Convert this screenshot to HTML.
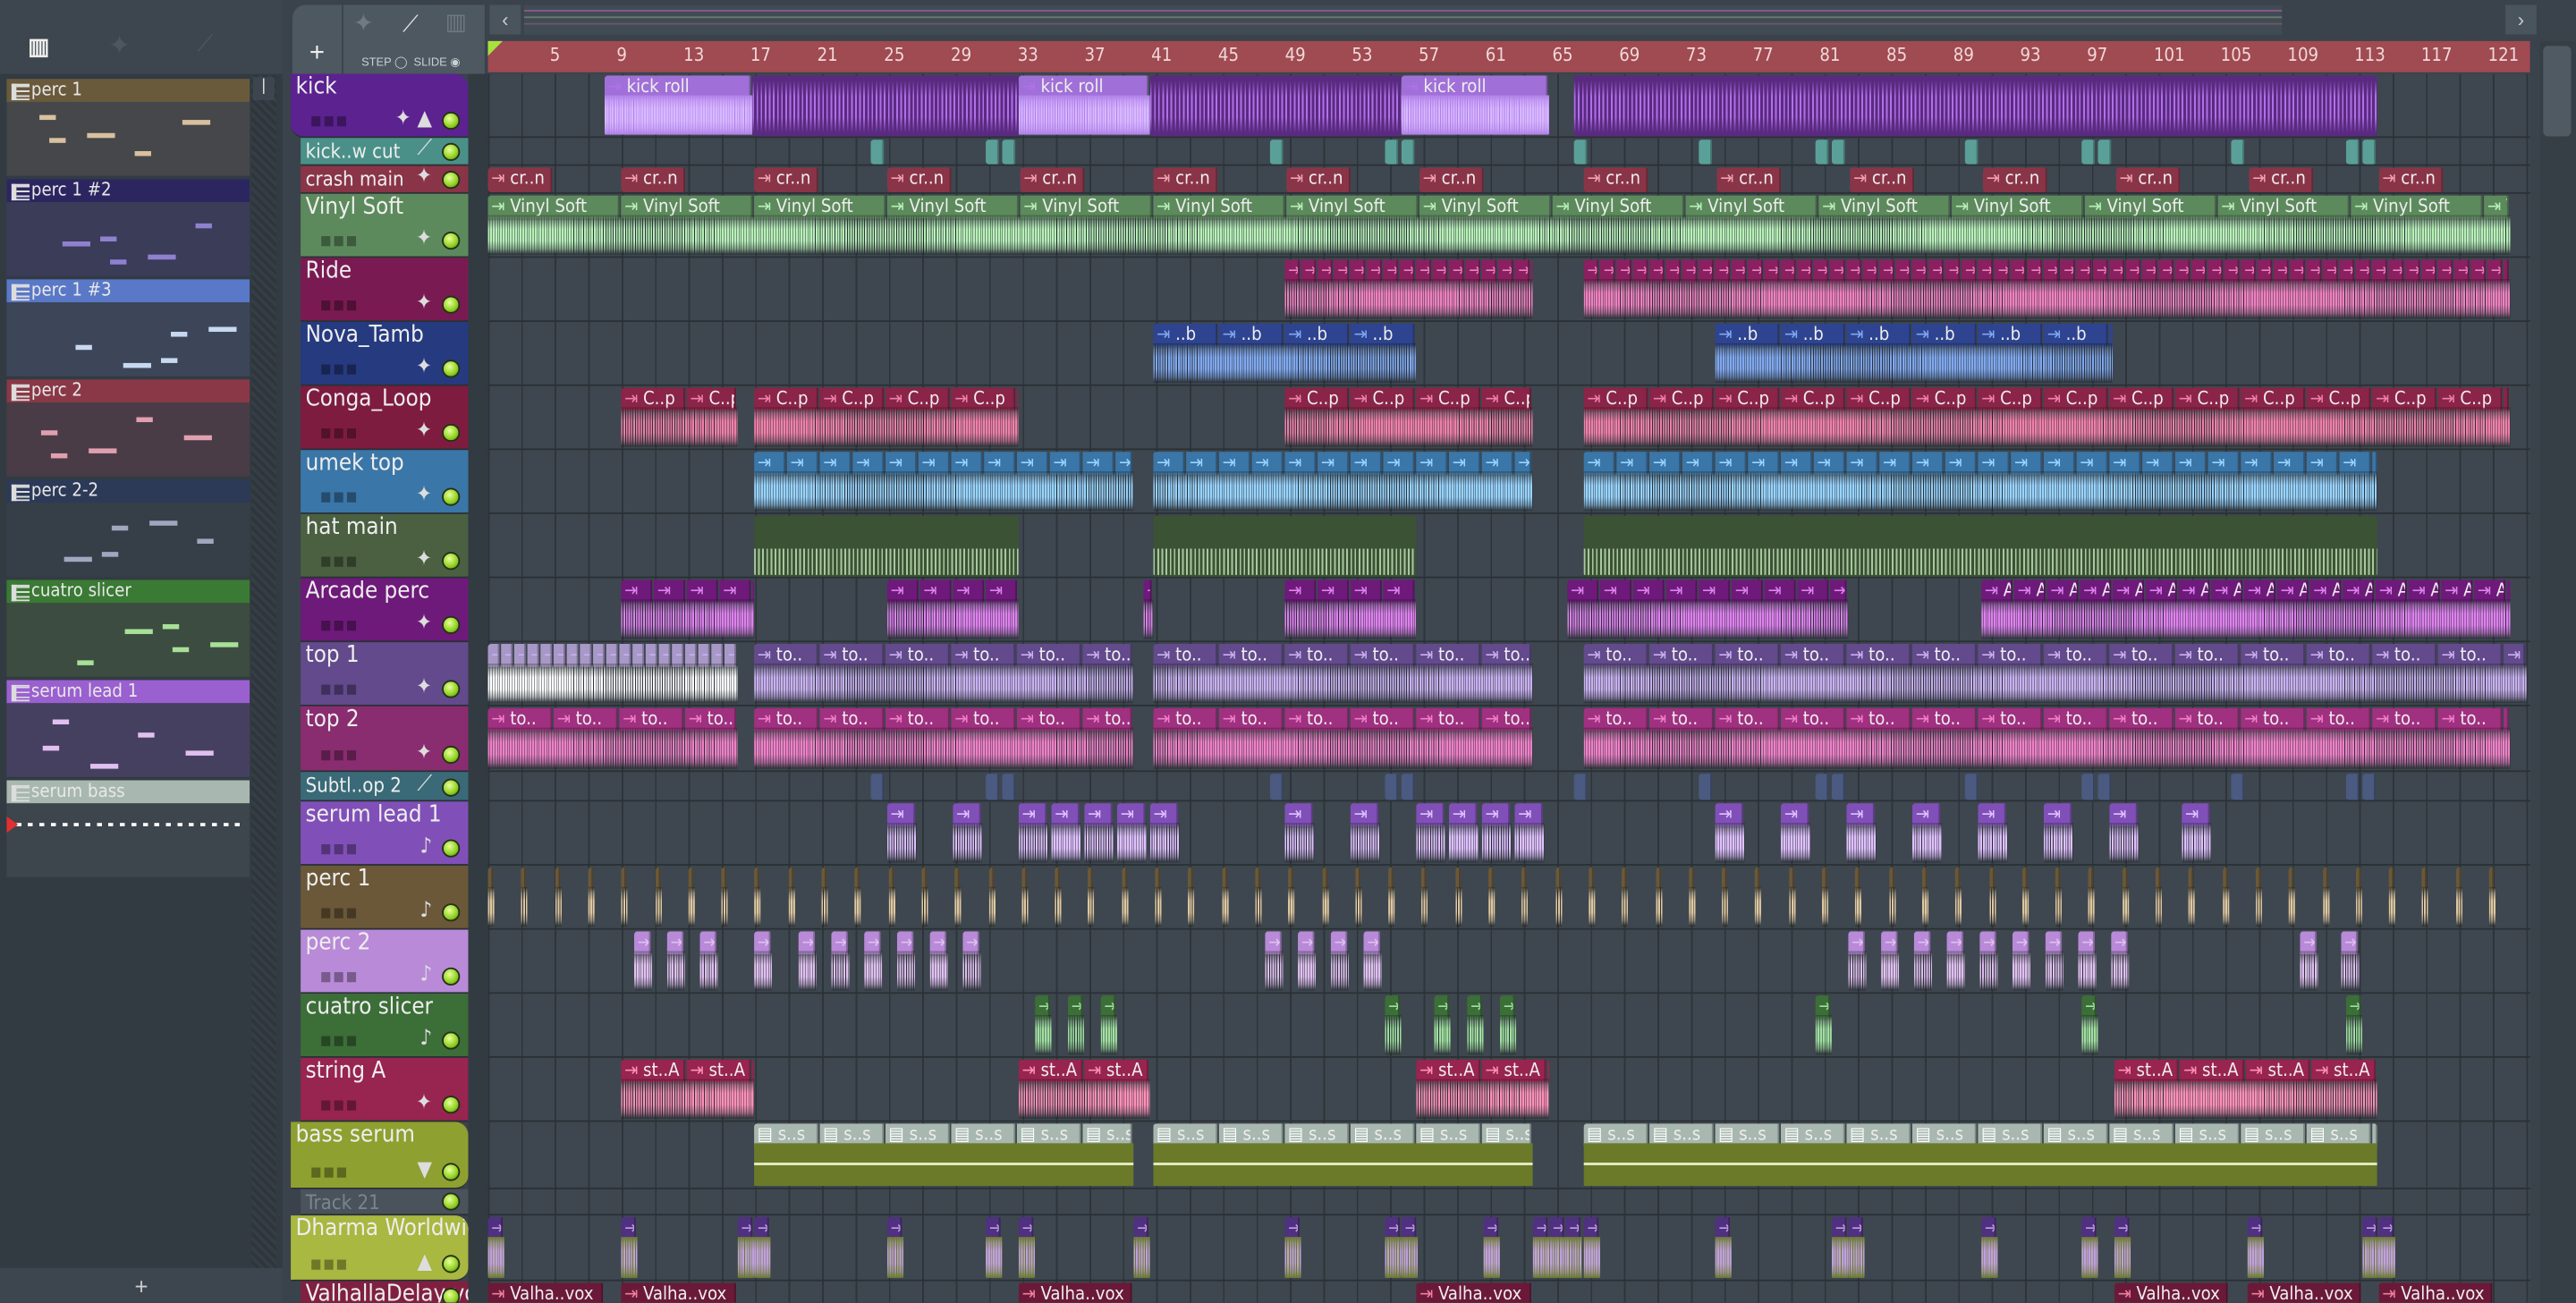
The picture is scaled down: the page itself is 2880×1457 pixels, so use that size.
<!DOCTYPE html>
<html><head><meta charset="utf-8">
<style>
*{box-sizing:border-box;margin:0;padding:0}
html,body{width:2880px;height:1456px;overflow:hidden;background:#3a434b}
#root{position:absolute;left:0;top:0;width:1568px;height:793px;transform:scale(1.836735);transform-origin:0 0;background:#3a434b;font-family:"Liberation Sans",sans-serif;overflow:hidden}
.abs{position:absolute}
.pat{position:absolute;left:4px;width:148px;height:59px;overflow:hidden}
.pat .t{height:14px;font:11px/14px "DejaVu Sans Condensed","Liberation Sans",sans-serif;color:#e8e8e8;padding-left:15px;position:relative}
.pat .t:before{content:"";position:absolute;left:3px;top:3px;width:8px;height:8px;border-left:3px solid #ddd;border-top:1px solid #ddd;border-bottom:1px solid #ddd;background:repeating-linear-gradient(#ddd 0 1px,transparent 1px 3px)}
.hdr{position:absolute;left:183px;width:102px;font:14px/17px "DejaVu Sans Condensed","Liberation Sans",sans-serif;color:#eee;padding-left:3px;overflow:hidden;white-space:nowrap;border-bottom:1px solid #2a3035}
.led{position:absolute;right:5px;bottom:4px;width:11px;height:11px;border-radius:50%;background:radial-gradient(circle at 40% 35%,#e8ff9a,#8fd020 60%,#4a7a10);border:1px solid #263018}
.ico{position:absolute;right:22px;bottom:2px;font-size:13px;color:#ddd}
.dots{position:absolute;left:12px;bottom:1px;font-size:8px;color:rgba(0,0,0,.35);letter-spacing:1px}
.clip{position:absolute;overflow:hidden;border-radius:2px}
.tl{position:absolute;top:25px;font:11px/18px "DejaVu Sans Condensed","Liberation Sans",sans-serif;color:#f0d8d8}
</style></head><body><div id="root">
<div class="abs" style="left:0;top:0;width:172px;height:45px;background:#3d464e"></div>
<div class="abs" style="left:17px;top:20px;font:bold 14px 'Liberation Sans';color:#eee">▥</div>
<div class="abs" style="left:66px;top:18px;font-size:16px;color:#4c575f">✦</div>
<div class="abs" style="left:120px;top:18px;font-size:14px;color:#4c575f">⟋</div>
<div class="abs" style="left:0;top:45px;width:172px;height:727px;background:#323b42"></div>
<div class="abs" style="left:153px;top:46px;width:15px;height:726px;background:repeating-linear-gradient(45deg,#353e45 0 2px,#2e363c 2px 4px)"></div>
<div class="abs" style="left:154px;top:47px;width:13px;height:14px;background:#3d464e;color:#ddd;font-size:10px;text-align:center">|</div>
<div class="abs" style="left:0;top:772px;width:172px;height:21px;background:#3d464e;color:#ccc;font-size:14px;text-align:center;line-height:22px">+</div>
<div class="abs" style="left:172px;top:0;width:1396px;height:45px;background:#3a434b"></div>
<div class="abs" style="left:178px;top:3px;width:30px;height:42px;background:#4e5860;border-radius:8px 0 0 0;color:#eee;font-size:16px;text-align:center;line-height:60px">+</div>
<div class="abs" style="left:209px;top:3px;width:86px;height:42px;background:#4e5860;color:#c8d0d4;font:7px 'Liberation Sans'">
<span class="abs" style="left:6px;top:2px;font-size:15px;color:#6f7a82">✦</span><span class="abs" style="left:36px;top:3px;font-size:14px;color:#dde">⟋</span><span class="abs" style="left:62px;top:2px;font-size:14px;color:#6f7a82">▥</span>
<span class="abs" style="left:11px;top:31px">STEP ◯ &nbsp;SLIDE ◉</span></div>
<div class="abs" style="left:298px;top:3px;width:19px;height:18px;background:#4a545c;color:#ccc;font-size:12px;text-align:center;line-height:18px">‹</div>
<div class="abs" style="left:319px;top:3px;width:1070px;height:18px;background:#414b53"></div>
<div class="abs" style="left:319px;top:6px;width:1070px;height:1px;background:#8a5a90"></div>
<div class="abs" style="left:319px;top:10px;width:1070px;height:1px;background:#6a7a70"></div>
<div class="abs" style="left:319px;top:14px;width:1070px;height:1px;background:#6a5868"></div>
<div class="abs" style="left:1525px;top:3px;width:19px;height:18px;background:#4a545c;color:#ccc;font-size:12px;text-align:center;line-height:18px">›</div>
<div class="abs" style="left:297px;top:25px;width:1243px;height:19px;background:#a04a52"></div>
<div class="abs" style="left:297px;top:25px;width:0;height:0;border-left:9px solid #a8e040;border-bottom:9px solid transparent"></div>
<div class="abs" style="left:285px;top:45px;width:12px;height:748px;background:#323b41"></div>
<div class="abs" style="left:297px;top:45px;width:1243px;height:748px;background-color:#3e474f;background-image:repeating-linear-gradient(90deg,#2d353b 0 1px,transparent 1px 20.34px)"></div>
<div class="abs" style="left:1546px;top:25px;width:22px;height:768px;background:#363f46"></div>
<div class="abs" style="left:1548px;top:28px;width:17px;height:55px;background:#505a62;border-radius:3px"></div>
</div>
<script>
const R=document.getElementById('root');
function el(h){R.insertAdjacentHTML('beforeend',h)}
const pats=[["perc 1","#6a5a3c","#45474a","#d8c0a0",48],["perc 1  #2","#2c2660","#3a3c58","#9080d0",109],["perc 1  #3","#5a78c8","#3c4658","#c8d8f0",170],["perc 2","#8a3848","#4a3c46","#e0a0b0",231],["perc 2-2","#2c3a58","#363f48","#a0a8c0",292],["cuatro slicer","#3a7a34","#3c4c40","#a8e098",353],["serum lead 1","#9a60d0","#464060","#e0c0f0",414],["serum bass","#a8b8b0","#3c464c","#fff",475]];
pats.forEach((p,i)=>{let notes='';for(let k=0;k<5;k++){notes+=`<div class="abs" style="left:${20+((i*37+k*29)%110)}px;top:${22+((i*13+k*11)%30)}px;width:${10+(k*7%14)}px;height:3px;background:${p[3]}"></div>`}
if(i==7)notes=`<div class="abs" style="left:6px;top:26px;width:140px;height:2px;background:repeating-linear-gradient(90deg,#fff 0 3px,transparent 3px 7px)"></div><div class="abs" style="left:0;top:22px;border-left:7px solid #e03030;border-top:5px solid transparent;border-bottom:5px solid transparent"></div>`;
el(`<div class="pat" style="top:${p[4]}px;background:${p[2]}"><div class="t" style="background:${p[1]}">${p[0]}</div>${notes}</div>`)});
for(let n=1;n<=121;n+=4){let x=297+(n-1)*10.17;el(`<div class="tl" style="left:${x-3}px">${n==1?'':n}</div>`)}
const T=[
["kick",45,39,"#5c2290","#7a3aa8","#b070e8","✦ ▲"],
["kick..w cut",84,17,"#4a9088","#5aa098","#bfe","⟋"],
["crash main",101,17,"#8a3448","#8a3448","#f0a0b0","✦"],
["Vinyl Soft",118,39,"#5c8a5c","#5c8a5c","#b8f0b8","✦"],
["Ride",157,39,"#7a1a52","#8a2060","#f080c0","✦"],
["Nova_Tamb",196,39,"#263a80","#2e4490","#80a8f0","✦"],
["Conga_Loop",235,39,"#7e1c40","#8a2448","#f080a8","✦"],
["umek top",274,39,"#3a76a8","#3a76a8","#98d4ff","✦"],
["hat main",313,39,"#4a6040","#3e5238","#a8c8a0","✦"],
["Arcade perc",352,39,"#6e1a7a","#6e1a7a","#e080f0","✦"],
["top 1",391,39,"#624a8c","#624a8c","#c8b0f0","✦"],
["top 2",430,40,"#8a2c70","#a03080","#f080c8","✦"],
["Subtl..op 2",470,18,"#3a6a78","#4a5a80","#bcd","⟋"],
["serum lead 1",488,39,"#8050b8","#8050b8","#e0c0ff","♪"],
["perc 1",527,39,"#6a5838","#6a5838","#e0c8a0","♪"],
["perc 2",566,39,"#b88ad8","#b88ad8","#e0c0f0","♪"],
["cuatro slicer",605,39,"#3c6e38","#3c6e38","#a0e0a0","♪"],
["string A",644,39,"#982450","#982450","#ff90b8","✦"],
["bass serum",683,41,"#8ea030","#a8b8b0","#e0f0c0","▼"],
["Track 21",724,16,"#4a535b","#4a535b","#888",""],
["Dharma Worldwid..",740,40,"#a8b840","#503080","#c0a0e0","▲"],
["ValhallaDelay vox",780,20,"#802040","#6a1a38","#f080a0",""]];
const clips={
0:[[368,458,"kick roll",90,"#a070d8"],[458,620,"",0],[620,700,"kick roll",80,"#a070d8"],[700,853,"",0],[853,943,"kick roll",90,"#a070d8"],[958,1447,"",0]],
3:[[297,1528,"Vinyl Soft",81]],
4:[[782,933,"",10],[964,1528,"",10]],
5:[[702,862,"..b",40],[1044,1286,"..b",40]],
6:[[378,449,"C..p",40],[459,620,"C..p",40],[782,933,"C..p",40],[964,1528,"C..p",40]],
7:[[459,690,"",20],[702,933,"",20],[964,1447,"",20]],
8:[[459,620,"",0],[702,862,"",0],[964,1447,"",0]],
9:[[378,459,"",20],[540,620,"",20],[696,702,"",6],[782,862,"",20],[954,1125,"",20],[1206,1528,"A..",20]],
10:[[297,449,"",8,"#a898c8"],[459,690,"to..",40],[702,933,"to..",40],[964,1538,"to..",40]],
11:[[297,449,"to..",40],[459,690,"to..",40],[702,933,"to..",40],[964,1528,"to..",40]],
17:[[378,459,"st..A",40],[620,700,"st..A",40],[862,943,"st..A",40],[1287,1447,"st..A",40]],
18:[[459,690,"s..s",40],[702,933,"s..s",40],[964,1447,"s..s",40]],
21:[[297,368,"Valha..vox",71],[378,449,"Valha..vox",71],[620,690,"Valha..vox",71],[862,933,"Valha..vox",71],[1287,1357,"Valha..vox",71],[1368,1438,"Valha..vox",71],[1448,1518,"Valha..vox",71]]};
const crash=[297,378,459,540,621,702,783,864,964,1045,1126,1207,1288,1369,1448];
clips[2]=crash.map(x=>[x,x+40,"cr..n",40]);
const auto=[530,600,610,773,843,853,958,1034,1105,1115,1196,1267,1277,1358,1428,1438];
clips[1]=auto.map(x=>[x,x+9,"",9]);clips[12]=auto.map(x=>[x,x+9,"",9]);
const sl=[540,580,620,640,660,680,700,782,822,862,882,902,922,1044,1084,1124,1164,1204,1244,1284,1328];
clips[13]=sl.map(x=>[x,x+18,"",18]);
let p1=[];for(let x=297;x<1520;x+=20.3)p1.push([x,x+4,"",4]);clips[14]=p1;
clips[15]=[386,406,426,459,486,506,526,546,566,586,770,790,810,830,1125,1145,1165,1185,1205,1225,1245,1265,1285,1400,1425].map(x=>[x,x+11,"",11]);
clips[16]=[630,650,670,843,873,893,913,1105,1267,1428].map(x=>[x,x+10,"",10]);
clips[20]=[297,378,449,459,540,600,620,690,782,843,853,903,933,964,1044,1115,1125,1206,1267,1287,1368,1438,1448].map(x=>[x,x+(x==933?30:10),"",10]);
T.forEach((t,i)=>{
 const [name,y,h,hc,cc,wc,ic]=t;
 const rnd=(i==18||i==20)?"border-radius:0 8px 8px 0;left:177px;width:108px;":(i==0?"border-radius:0 8px 0 8px;left:177px;width:108px;":"");
 el(`<div class="hdr" style="top:${y}px;height:${h}px;background:${hc};${rnd}${i==19?'color:#7a858d;':''}${h<20?'font-size:12px;line-height:16px':''}">${name}${h>20?'<span class="dots">■■■</span>':''}<span class="ico" style="${h<20?'bottom:1px':''}">${ic}</span><span class="led" style="${h<20?'bottom:2px':''}"></span></div>`);
 el(`<div class="abs" style="left:297px;top:${y+h-1}px;width:1243px;height:1px;background:#2a3136"></div>`);
 (clips[i]||[]).forEach(c=>{
  const [x1,x2,lab,seg,light]=c;const w=x2-x1;const lh=h>20?14:h;
  let labs='';
  if(seg>0){for(let x=0;x<w;x+=seg){labs+=`<div class="abs" style="left:${x}px;top:0;width:${Math.min(seg,w-x)-1}px;height:${lh}px;background:${light||cc};border-right:1px solid rgba(0,0,0,.25);font:11px/13px 'DejaVu Sans Condensed','Liberation Sans',sans-serif;color:#eee;white-space:nowrap;overflow:hidden;padding-left:2px">${h>20||lab?(i==18?'<b style="color:#fff">▤</b>':'<span style="color:'+wc+'">⇥</span>')+' '+lab:''}</div>`}}
  const bh=h>20?h-lh-1:0;
  let body='';
  if(h>20){
   const dark=(i==8)?'#3a4a34':(i==18?'#6a7a28':(i==20?'#6a7a30':(light&&i==0?'#b080e8':'rgba(0,0,0,.28)')));
   const col=(i==10&&light)?'#ffffff':(i==0&&light?'#d8b8ff':wc);
   const wave=(i==18)?`linear-gradient(transparent 45%,#e0e8c0 45% 52%,transparent 52%)`:`repeating-linear-gradient(90deg,${col} 0 1px,transparent 1px 1.4px,${col} 1.4px 2.6px,transparent 2.6px 3px)`;
   const mask=i==18?'':'-webkit-mask:linear-gradient(transparent 0,rgba(0,0,0,.6) 15%,#000 35%,#000 65%,rgba(0,0,0,.6) 85%,transparent 100%);';
   body=`<div class="abs" style="left:0;bottom:1px;width:${w}px;height:${bh}px;background:${dark}"></div><div class="abs" style="left:0;bottom:1px;width:${w}px;height:${bh}px;background:${wave};${mask}"></div>`;
   if(seg==0){body=`<div class="abs" style="left:0;top:0;width:${w}px;height:${h-1}px;background:${i==8?'#3c5234':'#5a2a80'}"></div><div class="abs" style="left:0;top:${i==8?h/2:3}px;width:${w}px;height:${i==8?h/2-3:h-7}px;background:repeating-linear-gradient(90deg,${wc} 0 1px,transparent 1px 2.5px);${i==8?'':'-webkit-mask:linear-gradient(transparent,#000 30%,#000 70%,transparent)'}"></div>`}
  }
  el(`<div class="clip" style="left:${x1}px;top:${y+1}px;width:${w}px;height:${h-2}px">${labs}${body}</div>`);
 });
});
</script>
</body></html>
